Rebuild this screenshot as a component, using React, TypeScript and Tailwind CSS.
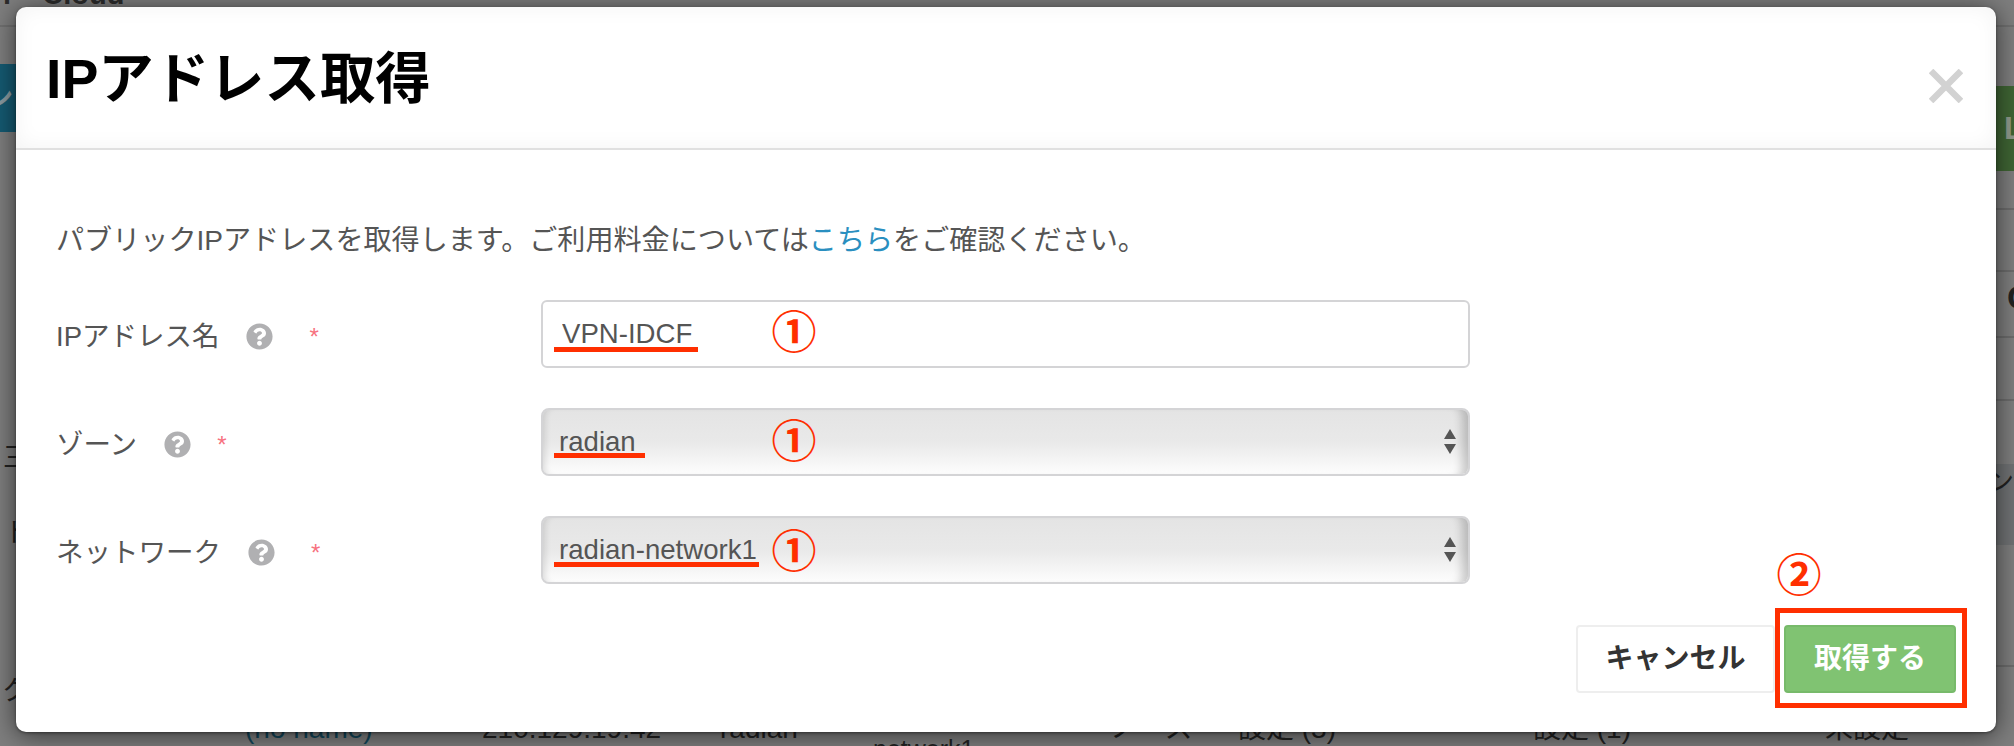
import React from "react";
import { FaQuestionCircle } from "react-icons/fa";

const ff = "font-['Liberation_Sans','Noto_Sans_CJK_JP',sans-serif]";

function Circled({ glyph, className }: { glyph: string; className: string }) {
  return (
    <span className={`absolute flex items-center justify-center text-[45px] leading-none font-bold text-[#ff2f00] ${className}`}>
      {glyph}
    </span>
  );
}

function Arrows() {
  return (
    <svg className="absolute right-[14px] top-[21px] pointer-events-none" width="12" height="26" viewBox="0 0 12 26">
      <path d="M6 0 L12 10 L0 10 Z" fill="#555" />
      <path d="M0 15 L12 15 L6 25 Z" fill="#555" />
    </svg>
  );
}

function Row({
  label,
  gapA,
  children,
}: {
  label: string;
  gapA: string;
  children: React.ReactNode;
}) {
  return (
    <div className="flex items-center h-[68px]">
      <div className="w-[483px] flex items-center shrink-0 mt-[5px]">
        <span className="text-[27.5px] leading-[36px] text-[#555] whitespace-nowrap -ml-[2px]">{label}</span>
        <FaQuestionCircle className="text-[#b0b0b2] ml-[27px]" size={27} />
        <span className={`text-[#f7727f] text-[24px] leading-none ${gapA}`}>*</span>
      </div>
      <div className="relative w-[929px] h-[68px] shrink-0">{children}</div>
    </div>
  );
}

const selectCls =
  "w-full h-full appearance-none border-2 border-[#d4d4d6] rounded-[8px] pl-[16px] text-[27.6px] text-[#555] bg-gradient-to-b from-[#e4e4e4] via-[#e9e9e9] to-[#fdfdfd] shadow-[inset_6px_0_6px_-4px_rgba(0,0,0,0.12),inset_-14px_0_10px_-8px_rgba(0,0,0,0.2)] outline-none";

export default function App() {
  return (
    <div className={`relative w-[2014px] h-[746px] overflow-hidden bg-[#7e7e7e] ${ff}`}>
      {/* dimmed page */}
      <div className="flex flex-col h-full text-[#222]">
        <div className="h-[27px] border-b-2 border-[#707070] pl-[3px] overflow-hidden">
          <div className="text-[29px] font-bold leading-[20px] -mt-[16px] text-[#2c2c2c] whitespace-nowrap">
            r<span className="ml-[28px]">Cloud</span>
          </div>
        </div>
        <div className="flex-1 flex justify-between">
          <div className="w-[16px] overflow-hidden">
            <div className="mt-[37px] h-[68px] bg-[#155a72] text-[#8a9aa0] text-[27px] leading-[68px] font-bold whitespace-nowrap -indent-[14px] overflow-hidden">
              ン
            </div>
            <div className="mt-[308px] text-[27px] leading-[36px] whitespace-nowrap h-[36px] indent-[3px] overflow-hidden">
              三
            </div>
            <div className="mt-[39px] text-[27px] leading-[36px] whitespace-nowrap h-[36px] indent-[4px] overflow-hidden">ト</div>
            <div className="mt-[122px] text-[27px] leading-[36px] whitespace-nowrap h-[36px] indent-[2px] overflow-hidden">ク</div>
          </div>
          <div className="w-[18px] overflow-hidden">
            <div className="mt-[59px] h-[85px] bg-[#3f6534] text-[#8f9a8c] text-[32px] leading-[85px] font-bold pl-[8px]">L</div>
            <div className="h-[39px] border-b-2 border-[#6c6c6c]" />
            <div className="h-[62px] border-b-2 border-[#6c6c6c] overflow-hidden" />
            <div className="h-[66px] border-b-2 border-[#6c6c6c] text-[34px] font-bold leading-[50px] pl-[11px] whitespace-nowrap overflow-hidden">
              C
            </div>
            <div className="h-[63px] border-b-2 border-[#6c6c6c]" />
            <div className="h-[63px]" />
            <div className="h-[81px] bg-[#707274] text-[27px] leading-[36px] overflow-hidden whitespace-nowrap -indent-[9px]">
              ン
            </div>
            <div className="h-[122px] border-b-2 border-[#6c6c6c]" />
          </div>
        </div>
        <div className="h-[33px] flex text-[28px] leading-[32px] whitespace-nowrap">
          <span className="ml-[245px] w-[237px] text-[#12465a]">(no name)</span>
          <span className="w-[238px]">210.129.19.42</span>
          <span className="w-[153px]">radian</span>
          <span className="w-[237px] text-[25px] leading-[72px]">network1</span>
          <span className="w-[128px]">ノース</span>
          <span className="w-[295px]">設定 (3)</span>
          <span className="w-[292px]">設定 (1)</span>
          <span>未設定</span>
        </div>
      </div>

      {/* modal */}
      <div className="absolute left-[16px] top-[7px] w-[1980px] h-[725px] bg-white rounded-[10px] shadow-[0_3px_26px_rgba(0,0,0,0.6),0_1px_3px_rgba(0,0,0,0.4)]">
        <div className="h-[143px] flex justify-between items-center pl-[30px] pr-[33px] border-b-2 border-[#e0e0e0] rounded-t-[10px] shadow-[inset_0_0_22px_rgba(0,0,0,0.05)]">
          <h1 className="text-[55.4px] leading-[70px] font-bold text-black whitespace-nowrap mt-[2px]">IPアドレス取得</h1>
          <svg width="34" height="34" viewBox="0 0 34 34" className="mt-[17px]">
            <path d="M2 2 L32 32 M32 2 L2 32" stroke="#d2d2d2" strokeWidth="6.5" />
          </svg>
        </div>

        <div className="pl-[42px]">
          <p className="mt-[73px] -ml-[2px] text-[28.1px] leading-[36px] text-[#555] whitespace-nowrap">
            パブリックIPアドレスを取得します。ご利用料金については<span className="text-[#2a8fc0]">こちら</span>をご確認ください。
          </p>
          <div className="mt-[41px] flex flex-col gap-[40px]">
            <Row label="IPアドレス名" gapA="ml-[36px]">
              <input
                readOnly
                value="VPN-IDCF"
                className="w-full h-full border-2 border-[#d4d4d6] rounded-[6px] pl-[19px] text-[27.6px] text-[#555] bg-white outline-none"
              />
              <span className="absolute left-[13px] top-[47px] w-[144px] h-[5px] bg-[#ff2f00]" />
              <Circled glyph="①" className="left-[232px] top-[12px] w-[42px] h-[42px]" />
            </Row>
            <Row label="ゾーン" gapA="ml-[26px]">
              <select className={selectCls} defaultValue="radian">
                <option>radian</option>
              </select>
              <Arrows />
              <span className="absolute left-[13px] top-[45px] w-[91px] h-[5px] bg-[#ff2f00]" />
              <Circled glyph="①" className="left-[232px] top-[13px] w-[42px] h-[42px]" />
            </Row>
            <Row label="ネットワーク" gapA="ml-[36px]">
              <select className={selectCls} defaultValue="radian-network1">
                <option>radian-network1</option>
              </select>
              <Arrows />
              <span className="absolute left-[13px] top-[46px] w-[205px] h-[5px] bg-[#ff2f00]" />
              <Circled glyph="①" className="left-[232px] top-[15px] w-[42px] h-[42px]" />
            </Row>
          </div>
        </div>

        <div className="relative mt-[41px] flex justify-end pr-[40px]">
          <button className="w-[199px] h-[68px] bg-white border-2 border-[#eeeeee] rounded-[4px] text-[28px] font-bold text-[#333] mr-[9px]">
            キャンセル
          </button>
          <button className="w-[172px] h-[68px] bg-[#80c372] border-2 border-[#77ba6a] rounded-[4px] text-[28px] font-bold text-white">
            取得する
          </button>
          <span className="absolute left-[1759px] top-[-17px] w-[192px] h-[100px] border-[5px] border-[#ff2f00]" />
          <Circled glyph="②" className="left-[1762px] top-[-70px] w-[42px] h-[42px]" />
        </div>
      </div>
    </div>
  );
}
